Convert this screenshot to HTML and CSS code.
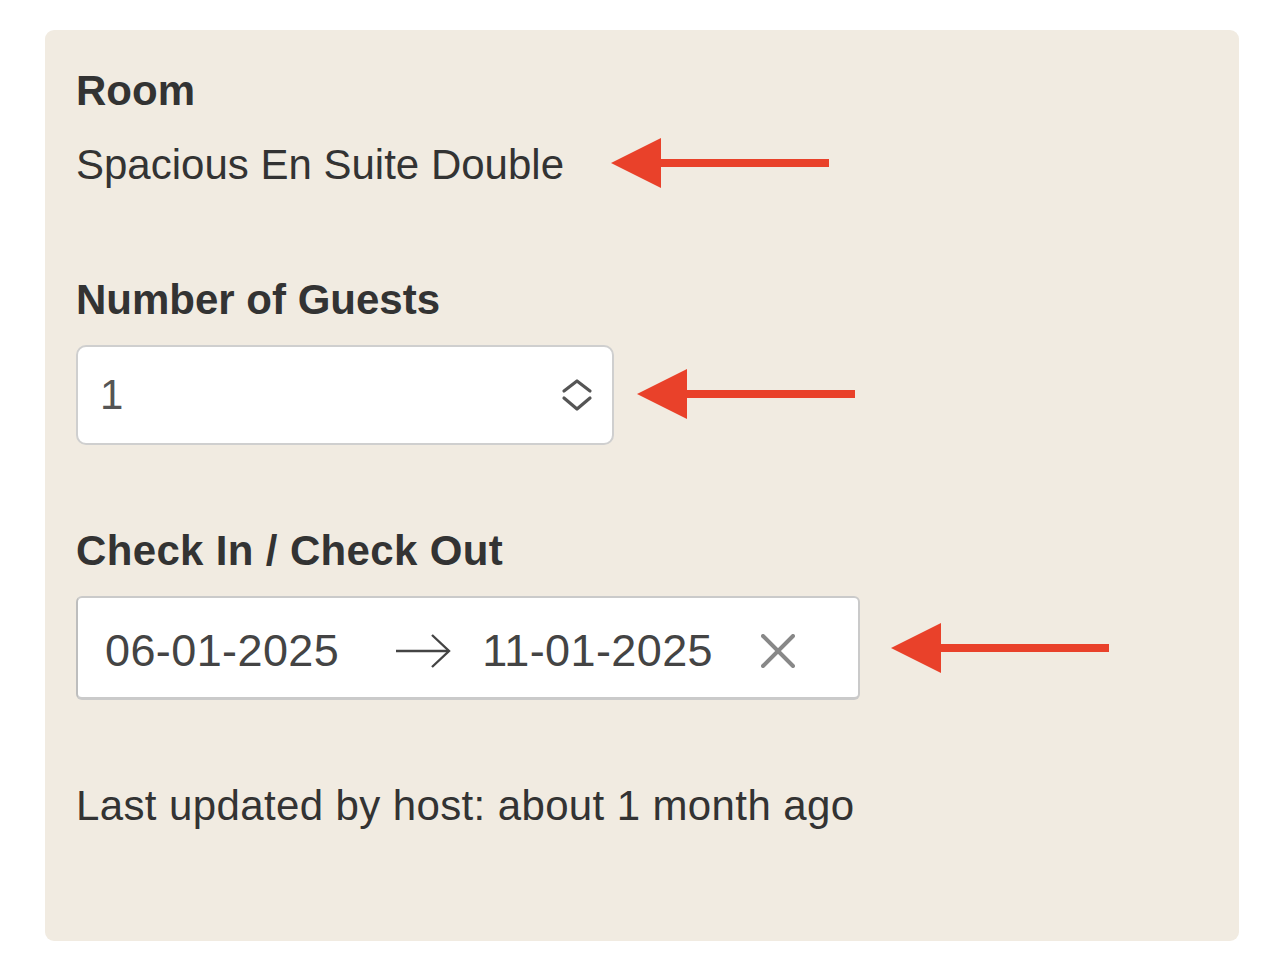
FILE: index.html
```html
<!DOCTYPE html>
<html lang="en">
<head>
<meta charset="utf-8">
<title>Booking details</title>
<link rel="stylesheet" href="styles.css">
</head>
<body>
<section class="panel">
  <div class="field">
    <h3 class="label label-room">Room</h3>
    <div class="row">
      <span class="value">Spacious En Suite Double</span>
      <svg class="pointer pointer-room" width="218" height="50" viewBox="0 0 218 50" aria-hidden="true"><polygon points="0,25 50,0 50,50" fill="#e9412a"/><rect x="49" y="21" width="169" height="8" fill="#e9412a"/></svg>
    </div>
  </div>

  <div class="field field-gap">
    <h3 class="label">Number of Guests</h3>
    <div class="row">
      <div class="select">
        <span class="select-value">1</span>
        <svg class="chevrons" width="32" height="36" viewBox="0 0 32 36" aria-hidden="true"><polyline points="3,13 16,3 29,13" fill="none" stroke="#555" stroke-width="3.2" stroke-linecap="round" stroke-linejoin="round"/><polyline points="3,20 16,31 29,20" fill="none" stroke="#555" stroke-width="3.2" stroke-linecap="round" stroke-linejoin="round"/></svg>
      </div>
      <svg class="pointer pointer-guests" width="218" height="50" viewBox="0 0 218 50" aria-hidden="true"><polygon points="0,25 50,0 50,50" fill="#e9412a"/><rect x="49" y="21" width="169" height="8" fill="#e9412a"/></svg>
    </div>
  </div>

  <div class="field field-gap2">
    <h3 class="label label-dates">Check In / Check Out</h3>
    <div class="row">
      <div class="daterange">
        <span class="date">06-01-2025</span>
        <svg class="range-arrow" width="56" height="34" viewBox="0 0 56 34" aria-hidden="true"><line x1="1" y1="17" x2="54" y2="17" stroke="#444" stroke-width="2.4"/><polyline points="37,1 54,17 37,33" fill="none" stroke="#444" stroke-width="2.4"/></svg>
        <span class="date date-end">11-01-2025</span>
        <svg class="clear" width="34" height="34" viewBox="0 0 34 34" aria-hidden="true"><line x1="2" y1="2" x2="32" y2="32" stroke="#888" stroke-width="4" stroke-linecap="round"/><line x1="32" y1="2" x2="2" y2="32" stroke="#888" stroke-width="4" stroke-linecap="round"/></svg>
      </div>
      <svg class="pointer pointer-dates" width="218" height="50" viewBox="0 0 218 50" aria-hidden="true"><polygon points="0,25 50,0 50,50" fill="#e9412a"/><rect x="49" y="21" width="169" height="8" fill="#e9412a"/></svg>
    </div>
  </div>

  <p class="updated">Last updated by host: about 1 month ago</p>
</section>
</body>
</html>
```

FILE: styles.css
```css
* {
  box-sizing: border-box;
}

html, body {
  margin: 0;
  padding: 0;
  background: #ffffff;
}

body {
  font-family: "Liberation Sans", Arial, Helvetica, sans-serif;
  color: #333333;
}

.panel {
  margin: 30px 45px 0 45px;
  width: 1194px;
  height: 911px;
  background: #f1ebe1;
  border-radius: 9px;
  padding: 36px 31px 0 31px;
}

.label {
  margin: 0 0 20px 0;
  font-size: 42px;
  line-height: 50px;
  font-weight: 700;
  color: #333333;
}

.label-room {
  margin-bottom: 24px;
}

.label-dates {
  letter-spacing: 0.35px;
}

.field-gap {
  margin-top: 85px;
}

.field-gap2 {
  margin-top: 81px;
}

.row {
  display: flex;
  align-items: center;
}

.value {
  font-size: 42px;
  line-height: 50px;
  color: #333333;
}

.pointer {
  flex: none;
  display: block;
}

.pointer-room {
  margin-left: 47px;
  margin-top: -4px;
}

.pointer-guests {
  margin-left: 23px;
  margin-top: -2px;
}

.pointer-dates {
  margin-left: 31px;
}

.select {
  width: 538px;
  height: 100px;
  background: #ffffff;
  border: 2px solid #cfcfcf;
  border-radius: 10px;
  display: flex;
  align-items: center;
  justify-content: space-between;
  padding: 0 19px 0 22px;
}

.select-value {
  font-size: 42px;
  line-height: 50px;
  color: #555555;
}

.chevrons {
  display: block;
  margin-top: 2px;
}

.daterange {
  width: 784px;
  height: 104px;
  background: #ffffff;
  border: 2px solid #cacaca;
  border-left-color: #bdbdbd;
  border-bottom-width: 3px;
  border-radius: 6px;
  display: flex;
  align-items: center;
  padding: 6px 0 0 27px;
}

.date {
  font-size: 45px;
  line-height: 52px;
  letter-spacing: 0.4px;
  color: #444444;
  white-space: nowrap;
}

.range-arrow {
  display: block;
  margin-left: 56px;
  flex: none;
}

.date-end {
  margin-left: 31px;
}

.clear {
  display: block;
  flex: none;
  margin-left: 48px;
}

.updated {
  margin: 81px 0 0 0;
  font-size: 42px;
  line-height: 50px;
  letter-spacing: 0.38px;
  color: #333333;
}
```
